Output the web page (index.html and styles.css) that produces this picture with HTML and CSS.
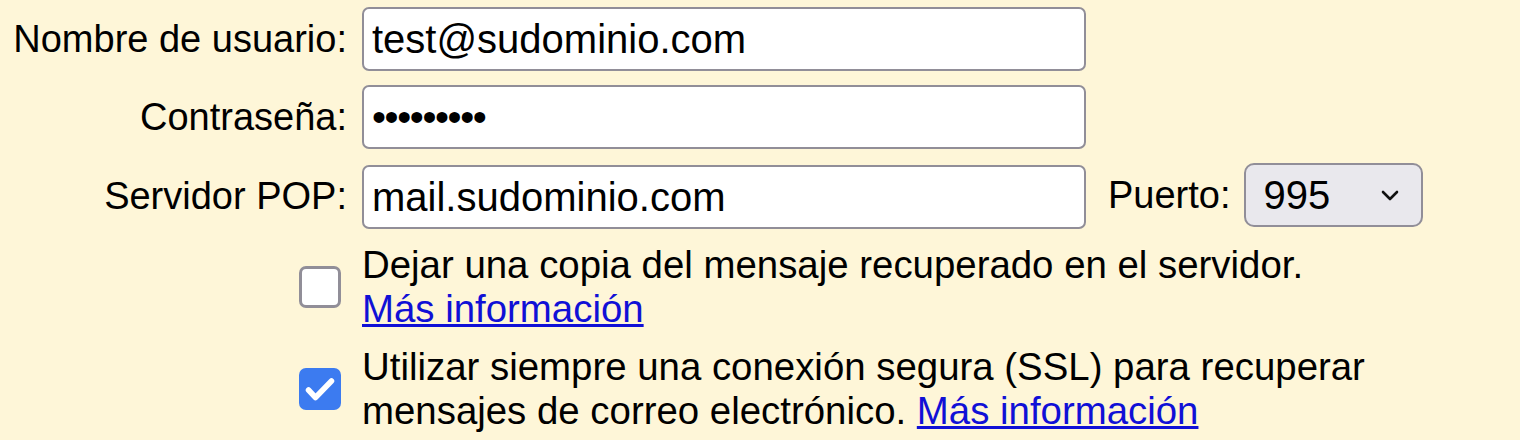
FILE: index.html
```html
<!DOCTYPE html>
<html lang="es">
<head>
<meta charset="utf-8">
<title>Configuración POP</title>
<link rel="stylesheet" href="styles.css">
</head>
<body>
<form class="pop-form">
  <label class="field-label" for="user">Nombre de usuario:</label>
  <div class="field"><input id="user" class="text-input" type="text" value="test@sudominio.com"></div>

  <label class="field-label" for="pass">Contraseña:</label>
  <div class="field"><input id="pass" class="text-input pass-input" type="password" value="secretos1"></div>

  <label class="field-label" for="server">Servidor POP:</label>
  <div class="field server-field">
    <input id="server" class="text-input server-input" type="text" value="mail.sudominio.com">
    <label class="port-label" for="port">Puerto:</label>
    <select id="port" class="port-select">
      <option>995</option>
      <option>110</option>
    </select>
  </div>

  <div class="check-cell"><input class="check" type="checkbox" id="leave"></div>
  <label class="check-text" for="leave">Dejar una copia del mensaje recuperado en el servidor.<br><a href="#" class="link">Más información</a></label>

  <div class="check-cell"><input class="check" type="checkbox" id="ssl" checked></div>
  <label class="check-text" for="ssl">Utilizar siempre una conexión segura (SSL) para recuperar<br>mensajes de correo electrónico. <a href="#" class="link">Más información</a></label>
</form>
</body>
</html>
```

FILE: styles.css
```css
html, body {
  margin: 0;
  padding: 0;
  background: #fef6d8;
}

body {
  font-family: "Liberation Sans", Arial, Helvetica, sans-serif;
  font-size: 38.4px;
  color: #000;
}

.pop-form {
  display: grid;
  grid-template-columns: 347px auto;
  column-gap: 15px;
  row-gap: 14px;
  padding-top: 7px;
  align-items: center;
}

.field-label {
  font-size: 38px;
  text-align: right;
  white-space: nowrap;
}

.field {
  display: flex;
  align-items: flex-start;
}

.text-input {
  box-sizing: border-box;
  width: 724px;
  height: 64px;
  margin: 0;
  padding: 0 8px;
  border: 2px solid #918e98;
  border-radius: 7px;
  background: #fff;
  font-family: "Liberation Sans", Arial, Helvetica, sans-serif;
  font-size: 40px;
  color: #000;
  outline: none;
}

.pass-input {
  letter-spacing: -1.4px;
}

.server-input {
  margin-top: 2px;
}

.port-label {
  font-size: 38px;
  margin-left: 22px;
  margin-right: 13px;
  line-height: 64px;
  white-space: nowrap;
}

.port-select {
  box-sizing: border-box;
  width: 179px;
  height: 64px;
  margin: 0;
  padding: 0 0 0 18px;
  border: 2px solid #918e98;
  border-radius: 10px;
  background-color: #e9e8ed;
  background-image: url("data:image/svg+xml;utf8,<svg xmlns='http://www.w3.org/2000/svg' width='18' height='11' viewBox='0 0 18 11'><path d='M2 2 L9 9 L16 2' fill='none' stroke='%23111' stroke-width='2.6' stroke-linecap='round' stroke-linejoin='round'/></svg>");
  background-repeat: no-repeat;
  background-position: right 22px center;
  font-family: "Liberation Sans", Arial, Helvetica, sans-serif;
  font-size: 40px;
  color: #000;
  -webkit-appearance: none;
  appearance: none;
  outline: none;
}

.check-cell {
  justify-self: end;
  display: flex;
  margin-right: 6px;
}

.check {
  -webkit-appearance: none;
  appearance: none;
  box-sizing: border-box;
  width: 42px;
  height: 42px;
  margin: 0;
  border: 3px solid #918e98;
  border-radius: 7px;
  background: #fff;
}

.check:checked {
  border: none;
  background-color: #3c7bf0;
  background-image: url("data:image/svg+xml;utf8,<svg xmlns='http://www.w3.org/2000/svg' width='42' height='42' viewBox='0 0 42 42'><path d='M9.5 22 L16.5 29.5 L32.5 13' fill='none' stroke='%23fff' stroke-width='5.5' stroke-linecap='round' stroke-linejoin='round'/></svg>");
  background-repeat: no-repeat;
}

.check-text {
  line-height: normal;
}

.link {
  color: #1010d6;
  text-decoration: underline;
}
```
